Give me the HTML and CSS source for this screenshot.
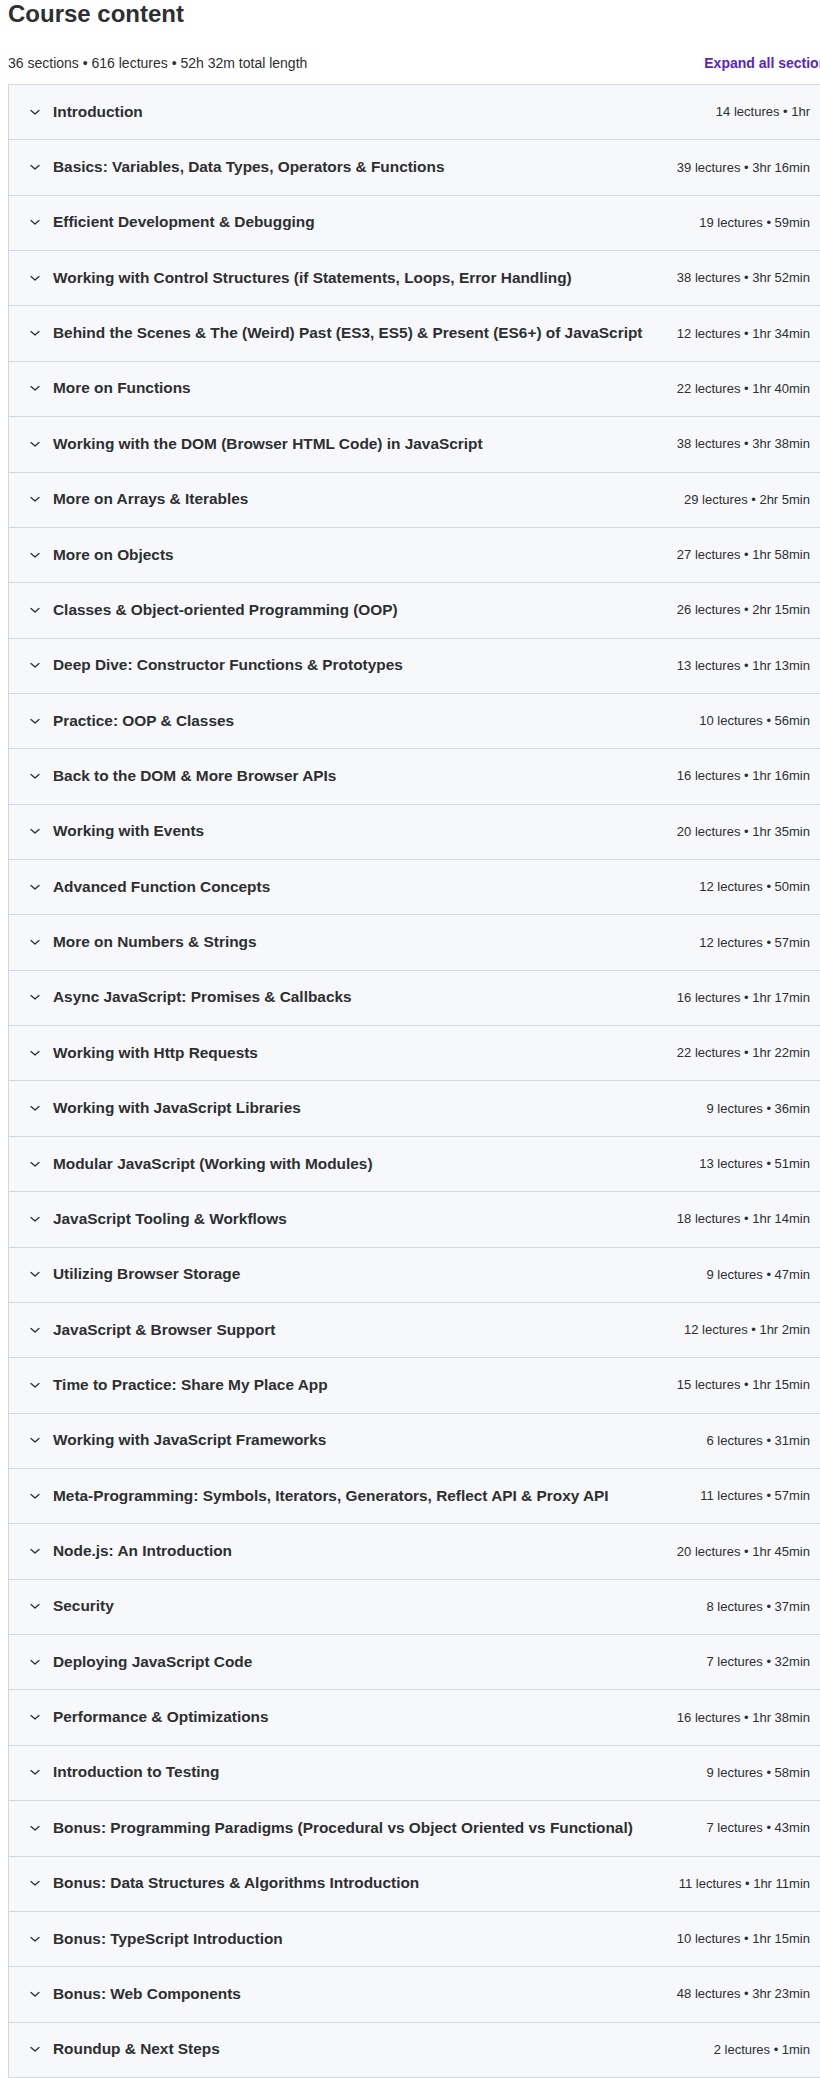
FILE: index.html
```html
<!DOCTYPE html>
<html lang="en">
<head>
<meta charset="utf-8">
<title>Course content</title>
<link rel="stylesheet" href="styles.css">
</head>
<body>
<div class="page">
  <h2 class="title">Course content</h2>
  <div class="summary">
    <span class="summary-text">36 sections • 616 lectures • 52h 32m total length</span>
    <button class="expand">Expand all sections</button>
  </div>
  <div class="accordion">
    <div class="row"><svg class="chev" viewBox="0 0 16 16"><path d="M4 6.5 L8 10 L12 6.5"/></svg><span class="name">Introduction</span><span class="meta">14 lectures • 1hr</span></div>
    <div class="row"><svg class="chev" viewBox="0 0 16 16"><path d="M4 6.5 L8 10 L12 6.5"/></svg><span class="name">Basics: Variables, Data Types, Operators &amp; Functions</span><span class="meta">39 lectures • 3hr 16min</span></div>
    <div class="row"><svg class="chev" viewBox="0 0 16 16"><path d="M4 6.5 L8 10 L12 6.5"/></svg><span class="name">Efficient Development &amp; Debugging</span><span class="meta">19 lectures • 59min</span></div>
    <div class="row"><svg class="chev" viewBox="0 0 16 16"><path d="M4 6.5 L8 10 L12 6.5"/></svg><span class="name">Working with Control Structures (if Statements, Loops, Error Handling)</span><span class="meta">38 lectures • 3hr 52min</span></div>
    <div class="row"><svg class="chev" viewBox="0 0 16 16"><path d="M4 6.5 L8 10 L12 6.5"/></svg><span class="name">Behind the Scenes &amp; The (Weird) Past (ES3, ES5) &amp; Present (ES6+) of JavaScript</span><span class="meta">12 lectures • 1hr 34min</span></div>
    <div class="row"><svg class="chev" viewBox="0 0 16 16"><path d="M4 6.5 L8 10 L12 6.5"/></svg><span class="name">More on Functions</span><span class="meta">22 lectures • 1hr 40min</span></div>
    <div class="row"><svg class="chev" viewBox="0 0 16 16"><path d="M4 6.5 L8 10 L12 6.5"/></svg><span class="name">Working with the DOM (Browser HTML Code) in JavaScript</span><span class="meta">38 lectures • 3hr 38min</span></div>
    <div class="row"><svg class="chev" viewBox="0 0 16 16"><path d="M4 6.5 L8 10 L12 6.5"/></svg><span class="name">More on Arrays &amp; Iterables</span><span class="meta">29 lectures • 2hr 5min</span></div>
    <div class="row"><svg class="chev" viewBox="0 0 16 16"><path d="M4 6.5 L8 10 L12 6.5"/></svg><span class="name">More on Objects</span><span class="meta">27 lectures • 1hr 58min</span></div>
    <div class="row"><svg class="chev" viewBox="0 0 16 16"><path d="M4 6.5 L8 10 L12 6.5"/></svg><span class="name">Classes &amp; Object-oriented Programming (OOP)</span><span class="meta">26 lectures • 2hr 15min</span></div>
    <div class="row"><svg class="chev" viewBox="0 0 16 16"><path d="M4 6.5 L8 10 L12 6.5"/></svg><span class="name">Deep Dive: Constructor Functions &amp; Prototypes</span><span class="meta">13 lectures • 1hr 13min</span></div>
    <div class="row"><svg class="chev" viewBox="0 0 16 16"><path d="M4 6.5 L8 10 L12 6.5"/></svg><span class="name">Practice: OOP &amp; Classes</span><span class="meta">10 lectures • 56min</span></div>
    <div class="row"><svg class="chev" viewBox="0 0 16 16"><path d="M4 6.5 L8 10 L12 6.5"/></svg><span class="name">Back to the DOM &amp; More Browser APIs</span><span class="meta">16 lectures • 1hr 16min</span></div>
    <div class="row"><svg class="chev" viewBox="0 0 16 16"><path d="M4 6.5 L8 10 L12 6.5"/></svg><span class="name">Working with Events</span><span class="meta">20 lectures • 1hr 35min</span></div>
    <div class="row"><svg class="chev" viewBox="0 0 16 16"><path d="M4 6.5 L8 10 L12 6.5"/></svg><span class="name">Advanced Function Concepts</span><span class="meta">12 lectures • 50min</span></div>
    <div class="row"><svg class="chev" viewBox="0 0 16 16"><path d="M4 6.5 L8 10 L12 6.5"/></svg><span class="name">More on Numbers &amp; Strings</span><span class="meta">12 lectures • 57min</span></div>
    <div class="row"><svg class="chev" viewBox="0 0 16 16"><path d="M4 6.5 L8 10 L12 6.5"/></svg><span class="name">Async JavaScript: Promises &amp; Callbacks</span><span class="meta">16 lectures • 1hr 17min</span></div>
    <div class="row"><svg class="chev" viewBox="0 0 16 16"><path d="M4 6.5 L8 10 L12 6.5"/></svg><span class="name">Working with Http Requests</span><span class="meta">22 lectures • 1hr 22min</span></div>
    <div class="row"><svg class="chev" viewBox="0 0 16 16"><path d="M4 6.5 L8 10 L12 6.5"/></svg><span class="name">Working with JavaScript Libraries</span><span class="meta">9 lectures • 36min</span></div>
    <div class="row"><svg class="chev" viewBox="0 0 16 16"><path d="M4 6.5 L8 10 L12 6.5"/></svg><span class="name">Modular JavaScript (Working with Modules)</span><span class="meta">13 lectures • 51min</span></div>
    <div class="row"><svg class="chev" viewBox="0 0 16 16"><path d="M4 6.5 L8 10 L12 6.5"/></svg><span class="name">JavaScript Tooling &amp; Workflows</span><span class="meta">18 lectures • 1hr 14min</span></div>
    <div class="row"><svg class="chev" viewBox="0 0 16 16"><path d="M4 6.5 L8 10 L12 6.5"/></svg><span class="name">Utilizing Browser Storage</span><span class="meta">9 lectures • 47min</span></div>
    <div class="row"><svg class="chev" viewBox="0 0 16 16"><path d="M4 6.5 L8 10 L12 6.5"/></svg><span class="name">JavaScript &amp; Browser Support</span><span class="meta">12 lectures • 1hr 2min</span></div>
    <div class="row"><svg class="chev" viewBox="0 0 16 16"><path d="M4 6.5 L8 10 L12 6.5"/></svg><span class="name">Time to Practice: Share My Place App</span><span class="meta">15 lectures • 1hr 15min</span></div>
    <div class="row"><svg class="chev" viewBox="0 0 16 16"><path d="M4 6.5 L8 10 L12 6.5"/></svg><span class="name">Working with JavaScript Frameworks</span><span class="meta">6 lectures • 31min</span></div>
    <div class="row"><svg class="chev" viewBox="0 0 16 16"><path d="M4 6.5 L8 10 L12 6.5"/></svg><span class="name">Meta-Programming: Symbols, Iterators, Generators, Reflect API &amp; Proxy API</span><span class="meta">11 lectures • 57min</span></div>
    <div class="row"><svg class="chev" viewBox="0 0 16 16"><path d="M4 6.5 L8 10 L12 6.5"/></svg><span class="name">Node.js: An Introduction</span><span class="meta">20 lectures • 1hr 45min</span></div>
    <div class="row"><svg class="chev" viewBox="0 0 16 16"><path d="M4 6.5 L8 10 L12 6.5"/></svg><span class="name">Security</span><span class="meta">8 lectures • 37min</span></div>
    <div class="row"><svg class="chev" viewBox="0 0 16 16"><path d="M4 6.5 L8 10 L12 6.5"/></svg><span class="name">Deploying JavaScript Code</span><span class="meta">7 lectures • 32min</span></div>
    <div class="row"><svg class="chev" viewBox="0 0 16 16"><path d="M4 6.5 L8 10 L12 6.5"/></svg><span class="name">Performance &amp; Optimizations</span><span class="meta">16 lectures • 1hr 38min</span></div>
    <div class="row"><svg class="chev" viewBox="0 0 16 16"><path d="M4 6.5 L8 10 L12 6.5"/></svg><span class="name">Introduction to Testing</span><span class="meta">9 lectures • 58min</span></div>
    <div class="row"><svg class="chev" viewBox="0 0 16 16"><path d="M4 6.5 L8 10 L12 6.5"/></svg><span class="name">Bonus: Programming Paradigms (Procedural vs Object Oriented vs Functional)</span><span class="meta">7 lectures • 43min</span></div>
    <div class="row"><svg class="chev" viewBox="0 0 16 16"><path d="M4 6.5 L8 10 L12 6.5"/></svg><span class="name">Bonus: Data Structures &amp; Algorithms Introduction</span><span class="meta">11 lectures • 1hr 11min</span></div>
    <div class="row"><svg class="chev" viewBox="0 0 16 16"><path d="M4 6.5 L8 10 L12 6.5"/></svg><span class="name">Bonus: TypeScript Introduction</span><span class="meta">10 lectures • 1hr 15min</span></div>
    <div class="row"><svg class="chev" viewBox="0 0 16 16"><path d="M4 6.5 L8 10 L12 6.5"/></svg><span class="name">Bonus: Web Components</span><span class="meta">48 lectures • 3hr 23min</span></div>
    <div class="row"><svg class="chev" viewBox="0 0 16 16"><path d="M4 6.5 L8 10 L12 6.5"/></svg><span class="name">Roundup &amp; Next Steps</span><span class="meta">2 lectures • 1min</span></div>
  </div>
</div>
</body>
</html>
```
FILE: styles.css
```css
html, body {
  margin: 0;
  padding: 0;
  background: #ffffff;
  overflow: hidden;
}

body {
  font-family: "Liberation Sans", Arial, sans-serif;
  color: #2d2f31;
}

.page {
  width: 827px;
  padding-left: 8px;
}

.title {
  margin: 0;
  font-size: 24px;
  line-height: 28px;
  font-weight: 700;
  color: #2d2f31;
}

.summary {
  display: flex;
  justify-content: space-between;
  align-items: center;
  margin-top: 25px;
  margin-bottom: 11px;
  height: 20px;
  font-size: 14px;
  line-height: 20px;
}

.summary-text {
  color: #2d2f31;
}

.expand {
  border: 0;
  background: none;
  padding: 0;
  font-family: inherit;
  font-size: 14px;
  font-weight: 700;
  color: #5624d0;
  line-height: 20px;
  white-space: nowrap;
}

.accordion {
  border: 1px solid #d1d7dc;
  border-bottom: 0;
}

.row {
  box-sizing: border-box;
  height: 55.36px;
  display: flex;
  align-items: center;
  padding: 0 24px 1px 18px;
  background: #f7f8fa;
  border-bottom: 1px solid #d1d7dc;
}

.chev {
  width: 16px;
  height: 16px;
  flex: none;
  margin-right: 10px;
  fill: none;
  stroke: #2d2f31;
  stroke-width: 1.3;
  stroke-linecap: round;
  stroke-linejoin: round;
}

.name {
  flex: 1;
  font-size: 15.4px;
  font-weight: 700;
  color: #2d2f31;
  white-space: nowrap;
}

.meta {
  flex: none;
  margin-left: 16px;
  font-size: 13px;
  color: #2d2f31;
  white-space: nowrap;
}
```
